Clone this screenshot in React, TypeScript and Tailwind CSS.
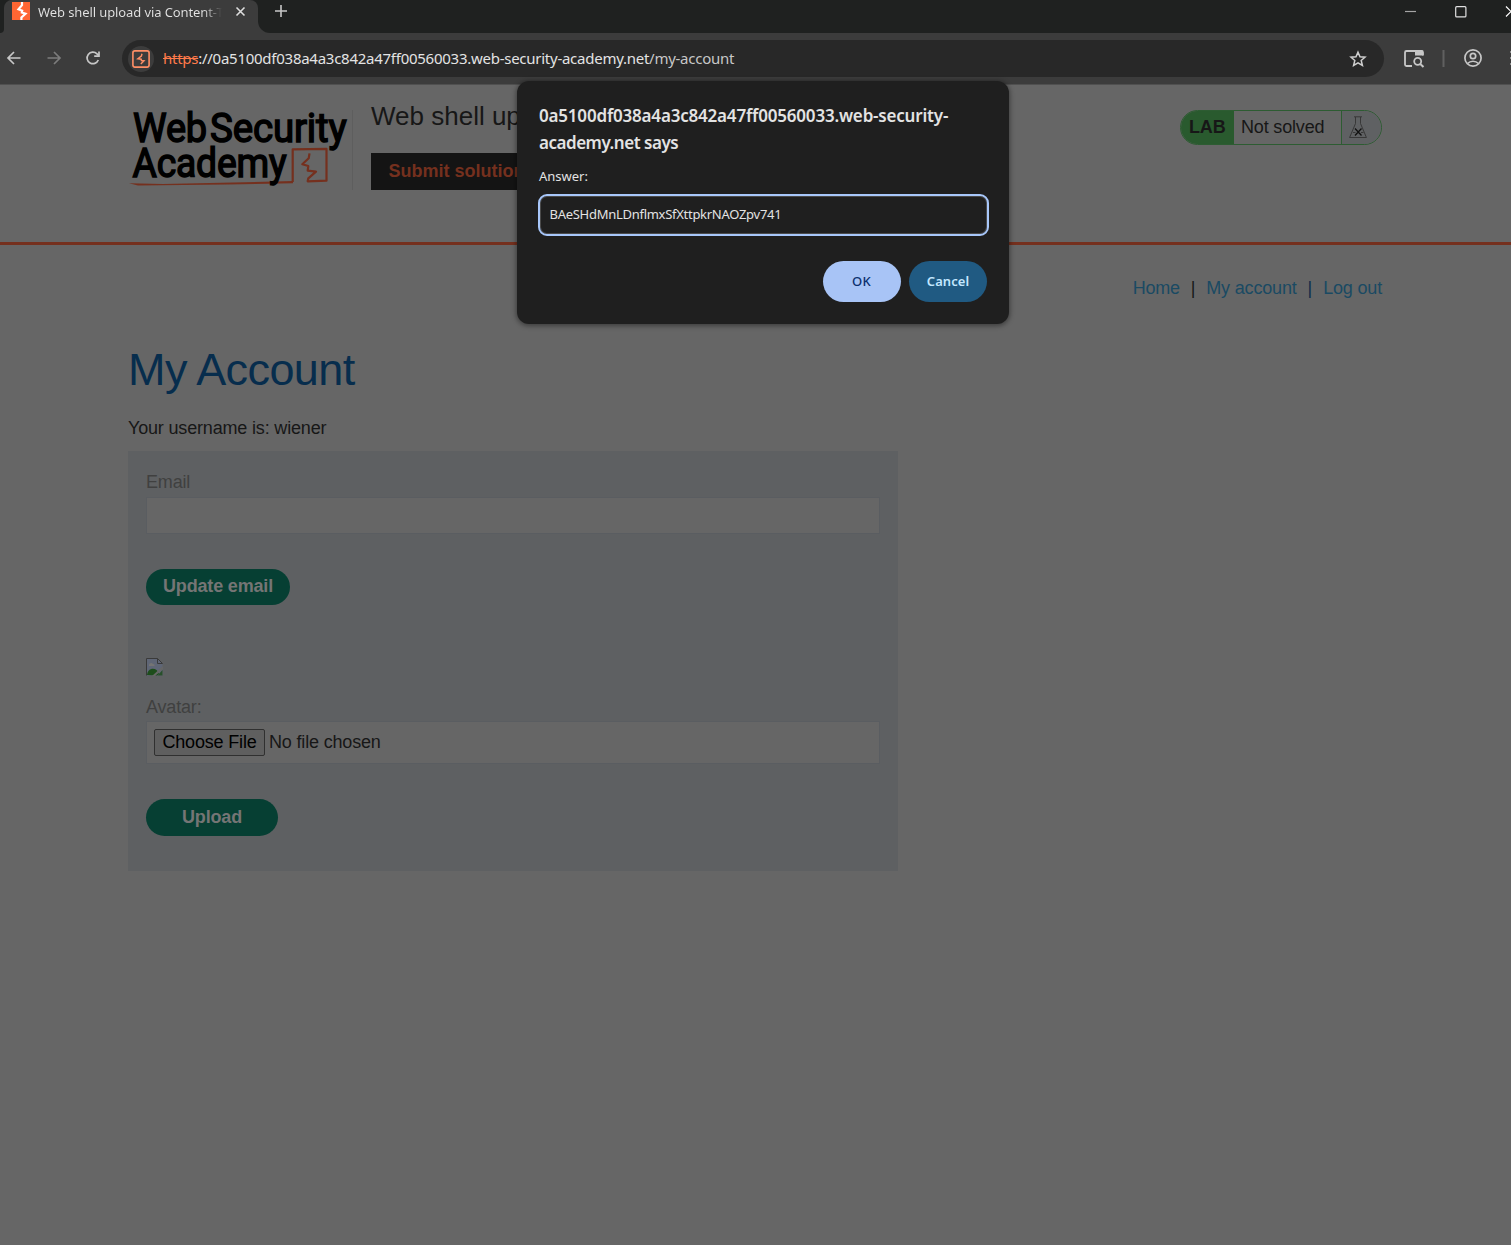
import React from 'react';

const UI = "font-['Noto_Sans','Open_Sans',sans-serif]";

function Bolt({ className }: { className: string }) {
  return (
    <svg viewBox="0 0 18 18" className={className} fill="none">
      <path d="M0 0h18v18H0z" fill="#ff6633" />
      <path d="M10 0v3.200L6.500 7.300l3.700 1.300-.4 2 3.700 1.100L9.400 15.500V18" stroke="#fff" strokeWidth="2.200" />
    </svg>
  );
}

function TabStrip() {
  return (
    <div className="flex h-[33px] bg-[#1f2120]">
      <div className="flex h-[33px] w-1 items-end bg-[#3c3c3c]">
        <div className="h-[33px] w-1 rounded-br-[4px] bg-[#1f2120]" />
      </div>
      <div className="flex h-[33px] w-[254px] rounded-t-lg bg-[#3c3c3c] pl-2">
        <Bolt className="mt-0.5 h-[18px] w-[18px] shrink-0" />
        <div className="ml-2 h-[25px] w-[184px] shrink-0 overflow-hidden whitespace-nowrap bg-gradient-to-r from-[#e3e3e3] from-90% to-[#3c3c3c] bg-clip-text text-[13px] leading-[25px] tracking-[-0.1px] text-transparent">
          Web shell upload via Content-Ty
        </div>
        <svg className="ml-[13px] mt-[6px] h-[11px] w-[11px]" viewBox="0 0 11 11" stroke="#dedede" strokeWidth="1.6">
          <path d="M1.5 1.5l8 8M9.5 1.5l-8 8" />
        </svg>
      </div>
      <div className="w-4 bg-[#3c3c3c]">
        <div className="h-[33px] w-4 rounded-bl-[12px] bg-[#1f2120]" />
      </div>
      <svg className="mt-1 h-[14px] w-[14px]" viewBox="0 0 14 14" stroke="#c7c7c7" strokeWidth="1.6">
        <path d="M7 1v12M1 7h12" />
      </svg>
      <svg className="ml-auto h-[26px] w-[111px]" viewBox="0 0 111 26" fill="none">
        <path d="M5 11.5h11" stroke="#a5a5a5" strokeWidth="1.2" />
        <rect x="55.7" y="6.7" width="10.2" height="10.2" rx="1" stroke="#e0e0e0" strokeWidth="1.2" />
        <path d="M106 6.5l10 10M116 6.5l-10 10" stroke="#fff" strokeWidth="1.2" />
      </svg>
    </div>
  );
}

function Toolbar() {
  return (
    <div className="flex h-[51px] items-center bg-[#3c3c3c]">
      <svg className="h-[37px] w-[122px] shrink-0" viewBox="0 0 122 37" fill="none" strokeWidth="1.7">
        <path d="M20.5 18H8.5M14 12l-6 6 6 6" stroke="#c7c7c7" />
        <path d="M47.5 18h12M54 12l6 6-6 6" stroke="#7c7c7c" />
        <path d="M98.3 20a5.8 5.8 0 1 1-1.3-6.2l1.6 1.7" stroke="#c7c7c7" />
        <path d="M99 11.5v4.6h-4.8" stroke="#c7c7c7" />
      </svg>
      <div className="flex h-[37px] w-[1262px] shrink-0 items-center rounded-full bg-[#282828] pl-[6px] pr-[17px]">
        <div className="flex h-[26px] w-[26px] items-center justify-center rounded-full bg-[#3c3c3c]">
          <svg className="h-[18px] w-[18px]" viewBox="0 0 18 18" fill="none" stroke="#ff8f66">
            <rect x="0.9" y="0.9" width="16.2" height="16.2" rx="2" strokeWidth="1.6" />
            <path d="M10 3.700L9.400 6 5.800 8.800l3.400.4.200 1.300 2.600.3L8.800 14" strokeWidth="1.4" />
          </svg>
        </div>
        <div className="-mt-0.5 ml-[9px] whitespace-nowrap text-[15px] leading-[22px] tracking-[-0.26px] text-[#e3e3e3]">
          <span className="text-[#ff7a4a] line-through">https</span>://0a5100df038a4a3c842a47ff00560033.web-security-academy.net
          <span className="text-[#c7c7c7]">/my-account</span>
        </div>
        <svg className="ml-auto h-[18px] w-[18px]" viewBox="0 0 18 18" fill="none" stroke="#d0d0d0" strokeWidth="1.5">
          <path d="M9 2.2l2 4.6 5 .4-3.8 3.3 1.2 4.9L9 12.8l-4.4 2.6 1.2-4.9L2 7.2l5-.4z" />
        </svg>
      </div>
      <svg className="h-[37px] w-[127px] shrink-0" viewBox="0 0 127 37" fill="none">
        <path d="M28 26h-5.500a1.500 1.500 0 0 1-1.500-1.500v-12a1.500 1.500 0 0 1 1.500-1.500H37.500a1.500 1.500 0 0 1 1.500 1.500v3" stroke="#c7c7c7" strokeWidth="1.8" />
        <path d="M31 10.500h8v5h-8z" fill="#c7c7c7" />
        <circle cx="33.700" cy="21.300" r="3.500" stroke="#c7c7c7" strokeWidth="1.800" />
        <path d="M36.300 24l3.200 3" stroke="#c7c7c7" strokeWidth="2" />
        <path d="M59.500 10v17" stroke="#606060" strokeWidth="2" />
        <circle cx="89" cy="18" r="8.100" stroke="#c7c7c7" strokeWidth="1.700" />
        <circle cx="89" cy="16" r="2.700" stroke="#c7c7c7" strokeWidth="1.700" />
        <path d="M83.500 23.500c3-3 8-3 11 0" stroke="#c7c7c7" strokeWidth="1.700" />
        <path d="M126 12h2M126 18h2M126 24h2" stroke="#8a8a8a" strokeWidth="2" />
      </svg>
    </div>
  );
}

function Logo() {
  return (
    <svg className="h-[80px] w-[225px] shrink-0" viewBox="0 0 225 80" fill="none">
      <path d="M1 73.300l34 .6 130-2.800v2.200L100 74.500 10 75.600z" fill="#75301e" />
      <g fill="#000" stroke="#000" strokeWidth="1.500" fontFamily="Roboto" fontWeight="400" fontSize="40.500">
        <text x="5" y="31.500" textLength="74" lengthAdjust="spacingAndGlyphs">Web</text>
        <text x="82" y="31.500" textLength="136.500" lengthAdjust="spacingAndGlyphs">Security</text>
        <text x="4.500" y="67" textLength="154" lengthAdjust="spacingAndGlyphs">Academy</text>
      </g>
      <path
        d="M164.700 72V39.300L198.500 38.800L198.500 70.700L179.700 71.300L180.300 68.300L188 61.700L179.700 60.700L180.300 56L174.300 54.300L180.700 48.300L181.500 43.300"
        stroke="#75301e"
        strokeWidth="2.200"
        strokeLinejoin="round"
      />
      <path d="M224.500 0v80" stroke="#5e5e5e" />
    </svg>
  );
}

function LabStatus() {
  return (
    <div className="flex h-[35px] w-[202px] shrink-0 overflow-hidden rounded-full border border-[#2d5c32] text-[18px] leading-[33px] text-[#171717]">
      <div className="w-[53px] bg-[#295a2e] pl-[8px] font-bold">LAB</div>
      <div className="w-[107px] pl-[7px]">Not solved</div>
      <div className="grow border-l border-[#2d5c32] bg-[#5f6163]">
        <svg className="ml-[7px] mt-[5px] h-[23px] w-[18px]" viewBox="0 0 18 23" fill="none" stroke="#333">
          <path d="M5 .8h8M6.500 1v6.500L.6 21.500h16.800L11.500 7.500V1M4 16.500h2.500M12 16.500h2.500" strokeWidth=".9" />
          <path d="M6 12.500l6.500 7M12.500 12.500l-6.500 7" stroke="#111" strokeWidth="1.300" />
        </svg>
      </div>
    </div>
  );
}

function BrokenImage() {
  return (
    <svg className="h-[18px] w-[17px]" viewBox="0 0 17 18">
      <path d="M.5.5h11l5 5v12H.5z" fill="#5f6676" />
      <path d="M3 7c0-2 3-3 4-1 2 0 2 2 1 2H3z" fill="#747474" />
      <path d="M1 17c1-8 10-8 12-1l-2 1.500z" fill="#1d4d1b" />
      <path d="M17 8v3l-8 7H6z" fill="#666" />
      <path d="M11.500 17.500h5V12z" fill="#28502a" />
      <path d="M.5 17.500V.5h11l5 5h-5v-5" fill="none" stroke="#3a3a3a" />
    </svg>
  );
}

function Dialog() {
  return (
    <div className={`absolute left-[517px] top-[81px] flex h-[243px] w-[492px] flex-col rounded-xl bg-[#1f1f1f] px-[21px] text-[#e3e3e3] shadow-[0_1px_5px_1px_rgba(0,0,0,0.4)] ${UI}`}>
      <div className="mt-[21px] pl-px text-[17px] font-semibold leading-[27px]">
        <div className="whitespace-nowrap tracking-[-0.19px]">0a5100df038a4a3c842a47ff00560033.web-security-</div>
        <div className="tracking-[-0.48px]">academy.net says</div>
      </div>
      <div className="mt-[10px] pl-px text-[13px] leading-5 tracking-normal">Answer:</div>
      <div className="mt-2 flex h-[42px] w-[451px] items-center rounded-[9px] border-2 border-[#a8c7fa] pl-[9.5px] text-[13px] tracking-[-0.28px] shadow-[inset_0_0_0_1px_#4a4a4a]">
        BAeSHdMnLDnflmxSfXttpkrNAOZpv741
      </div>
      <div className="mt-[25px] flex justify-end gap-2 pr-px text-[13px] font-semibold">
        <button className="h-[41px] w-[78px] rounded-full bg-[#a8c4f6] pr-px pt-px font-medium tracking-[0.3px] text-[#0b2f6e]">OK</button>
        <button className="h-[41px] w-[78px] rounded-full bg-[#205a82] pt-px tracking-[0.05px] text-[#c2e7ff]">Cancel</button>
      </div>
    </div>
  );
}

export default function App() {
  return (
    <div className="relative h-[1245px] w-[1511px] overflow-hidden bg-[#666666] font-['Liberation_Sans',sans-serif] text-[18px] tracking-[-0.17px] text-[#171717]">
      <div className={UI}>
        <TabStrip />
        <Toolbar />
      </div>
      <header className="flex h-[161px] items-start border-b-[3px] border-t border-b-[#75301e] border-t-[#505050] pl-32 pr-[129px] pt-[25px]">
        <Logo />
        <div className="ml-[18px]">
          <h2 className="-mt-[9px] h-[52px] whitespace-nowrap text-[26px] leading-[30px] tracking-normal">Web shell up</h2>
          <div className="h-[37px] w-[160px] whitespace-nowrap bg-[#141414] pl-[17.5px] font-bold leading-[36px] tracking-normal text-[#75301e]">Submit solution</div>
        </div>
        <div className="ml-auto">
          <LabStatus />
        </div>
      </header>
      <main className="pl-32 pr-[129px]">
        <nav className="flex justify-end pt-8 leading-[22px] text-[#1a4a63]">
          <a className="tracking-[-0.25px]">Home</a>
          <span className="mx-[11px] text-[#171717]">|</span>
          <a>My account</a>
          <span className="mx-[11px] text-[#0e2c4a]">|</span>
          <a>Log out</a>
        </nav>
        <h1 className="mt-[44px] text-[45px] leading-[54px] tracking-[-0.6px] text-[#072d4d]">My Account</h1>
        <p className="mt-5 leading-[22px]">Your username is: wiener</p>
        <section className="mt-3 h-[420px] w-[770px] bg-[#5e6062] px-[18px] pt-5">
          <label className="block leading-[22px] text-[#404040]">Email</label>
          <div className="mt-1 h-[37px] w-[734px] border border-[#5a5d61] bg-[#666666]" />
          <button className="mt-[35px] block h-[36px] w-[144px] rounded-full bg-[#063f33] pb-0.5 font-bold text-[#757575]">Update email</button>
          <div className="mt-[53px]">
            <BrokenImage />
          </div>
          <label className="mt-[20px] block leading-[22px] text-[#404040]">Avatar:</label>
          <div className="mt-[3px] flex h-[43px] w-[734px] items-center border border-[#5a5d61] bg-[#666666] pb-px pl-[7px]">
            <button className="h-[27px] w-[111px] rounded-[2px] border border-[#303030] bg-[#5f5f5f] leading-[25px] text-black">Choose File</button>
            <span className="ml-1">No file chosen</span>
          </div>
          <button className="mt-[35px] block h-[37px] w-[132px] rounded-full bg-[#063f33] pb-px font-bold text-[#757575]">Upload</button>
        </section>
      </main>
      <Dialog />
    </div>
  );
}
